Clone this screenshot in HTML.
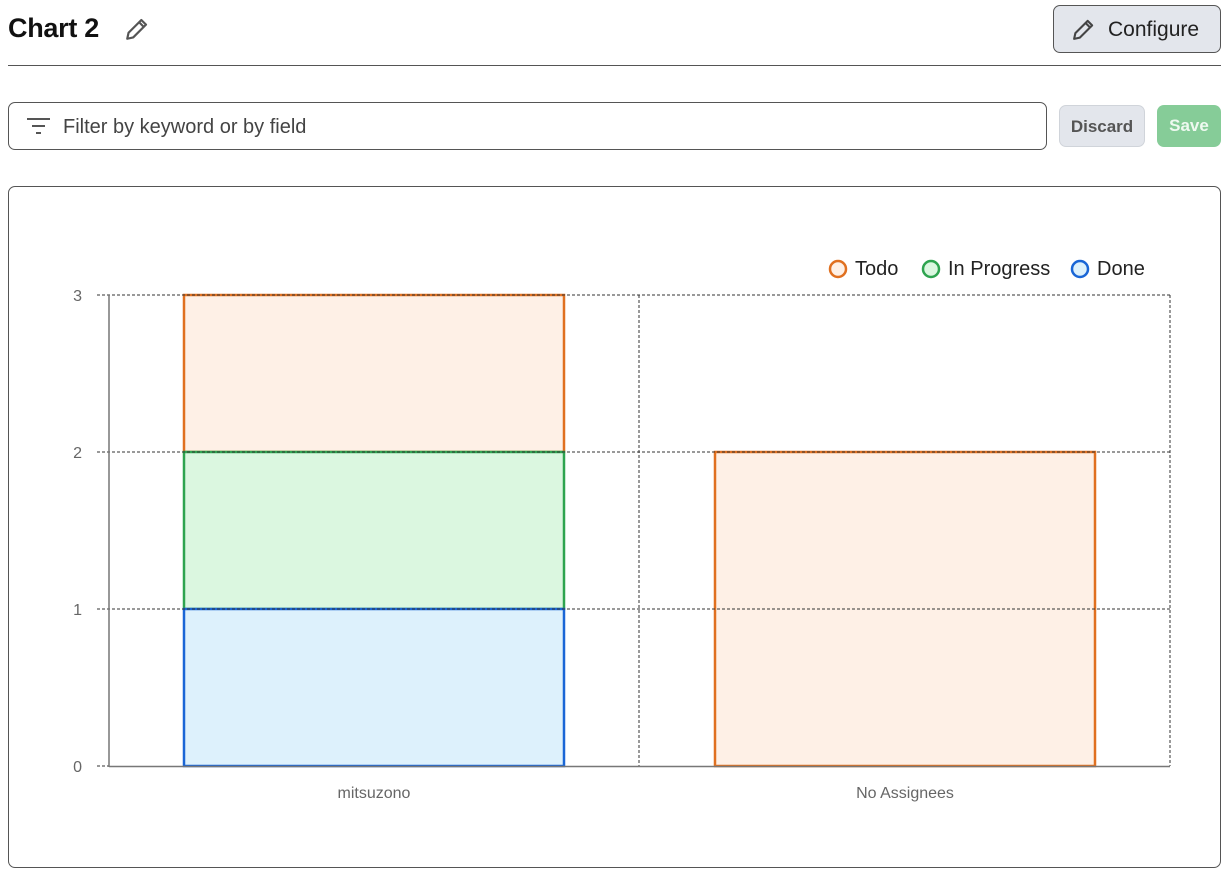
<!DOCTYPE html>
<html><head><style>
body{margin:0;width:1230px;height:875px;background:#fff;font-family:"Liberation Sans",sans-serif;position:relative;overflow:hidden}
.abs{position:absolute}
</style></head><body>
<div class="abs" style="left:8px;top:13px;font-size:27px;color:#111;font-weight:bold;letter-spacing:-0.3px">Chart 2</div>
<svg class="abs" style="left:124px;top:16px" width="26" height="26" viewBox="0 0 24 24" fill="none" stroke="#555" stroke-width="2" stroke-linejoin="round"><path d="M3 21l1.2-5.5L16 3.7l4.3 4.3L8.5 19.8z M14 5.8l4.2 4.2"/></svg>
<div class="abs" style="left:1053px;top:5px;width:168px;height:48px;box-sizing:border-box;border:1px solid #555;border-radius:7px;background:#e3e6ec"></div>
<svg class="abs" style="left:1071px;top:17px" width="25" height="25" viewBox="0 0 24 24" fill="none" stroke="#444" stroke-width="2" stroke-linejoin="round"><path d="M3 21l1.2-5.5L16 3.7l4.3 4.3L8.5 19.8z M14 5.8l4.2 4.2"/></svg>
<div class="abs" style="left:1108px;top:18px;font-size:21px;color:#222">Configure</div>
<div class="abs" style="left:8px;top:65px;width:1213px;height:1px;background:#555"></div>
<div class="abs" style="left:8px;top:102px;width:1039px;height:48px;box-sizing:border-box;border:1px solid #555;border-radius:7px"></div>
<svg class="abs" style="left:27px;top:116px" width="24" height="20"><g stroke="#555" stroke-width="2"><line x1="0" y1="3" x2="23" y2="3"/><line x1="5" y1="10" x2="18" y2="10"/><line x1="9" y1="17" x2="14" y2="17"/></g></svg>
<div class="abs" style="left:63px;top:116px;font-size:20px;color:#444">Filter by keyword or by field</div>
<div class="abs" style="left:1059px;top:105px;width:86px;height:42px;box-sizing:border-box;border:1px solid #d0d4da;border-radius:7px;background:#e3e6ec;color:#555;font-size:17px;font-weight:bold;text-align:center;line-height:42px">Discard</div>
<div class="abs" style="left:1157px;top:105px;width:64px;height:42px;border-radius:7px;background:#86cc98;color:#eef9f0;font-size:17px;font-weight:bold;text-align:center;line-height:42px">Save</div>
<div class="abs" style="left:8px;top:186px;width:1213px;height:682px;box-sizing:border-box;border:1px solid #555;border-radius:7px"></div>
<svg class="abs" style="left:0;top:0" width="1230" height="875" font-family="Liberation Sans, sans-serif">
<g fill="#666" font-size="16" text-anchor="end"><text x="82" y="301">3</text><text x="82" y="458">2</text><text x="82" y="615">1</text><text x="82" y="772">0</text></g>
<rect x="184" y="295" width="380" height="157" fill="#fef0e6" stroke="#e07020" stroke-width="2.5"/>
<rect x="184" y="452" width="380" height="157" fill="#dbf7e0" stroke="#2ea44f" stroke-width="2.5"/>
<rect x="184" y="609" width="380" height="157" fill="#ddf1fc" stroke="#1a66d6" stroke-width="2.5"/>
<rect x="715" y="452" width="380" height="314" fill="#fef0e6" stroke="#e07020" stroke-width="2.5"/>
<g stroke="#333" stroke-width="1" stroke-dasharray="3,2" fill="none">
<line x1="97" y1="295" x2="1170" y2="295"/><line x1="97" y1="452" x2="1170" y2="452"/><line x1="97" y1="609" x2="1170" y2="609"/><line x1="97" y1="766" x2="109" y2="766"/>
<line x1="639" y1="295" x2="639" y2="766"/><line x1="1170" y1="295" x2="1170" y2="766"/>
</g>
<line x1="109" y1="295" x2="109" y2="767" stroke="#777" stroke-width="1.5"/>
<line x1="109" y1="766.5" x2="1170" y2="766.5" stroke="#777" stroke-width="1.5"/>
<g fill="#666" font-size="16" text-anchor="middle"><text x="374" y="798">mitsuzono</text><text x="905" y="798">No Assignees</text></g>
<circle cx="838" cy="269" r="8" fill="#fef0e6" stroke="#e07020" stroke-width="2.5"/>
<circle cx="931" cy="269" r="8" fill="#dbf7e0" stroke="#2ea44f" stroke-width="2.5"/>
<circle cx="1080" cy="269" r="8" fill="#ddf1fc" stroke="#1a66d6" stroke-width="2.5"/>
<g fill="#222" font-size="20"><text x="855" y="275">Todo</text><text x="948" y="275">In Progress</text><text x="1097" y="275">Done</text></g>
</svg>
</body></html>
